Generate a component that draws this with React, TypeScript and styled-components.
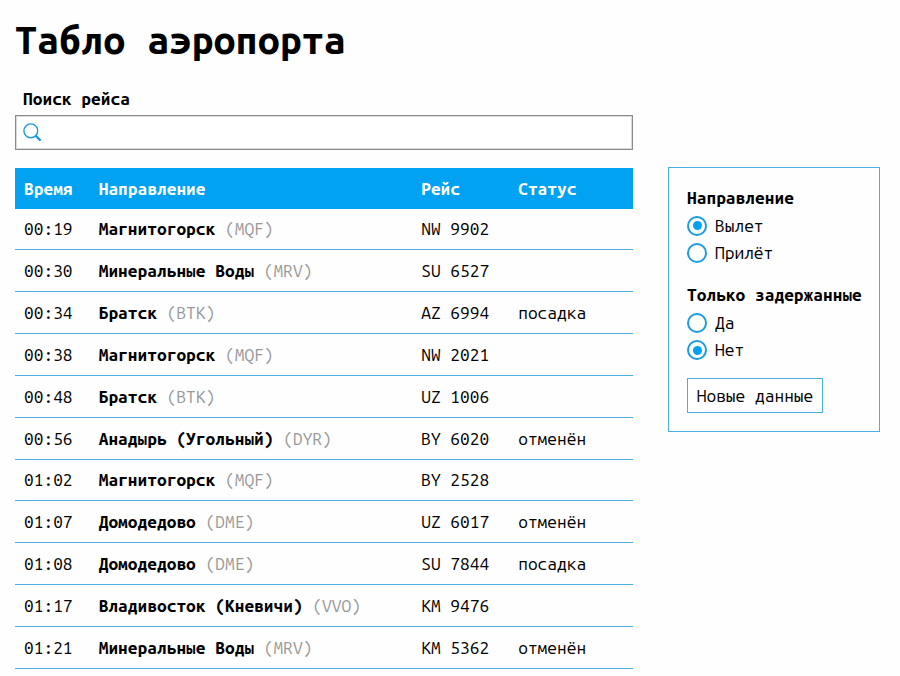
import React, { useState } from "react";
import styled, { createGlobalStyle } from "styled-components";

const ACCENT = "#00a2f1";
const LINE = "#4aaede";

const GlobalStyle = createGlobalStyle`
  * { box-sizing: border-box; }
  body {
    margin: 0;
    background: #fefefe;
    color: #000;
    font: 17.35px/20px "Ubuntu Mono", "DejaVu Sans Mono", monospace;
    overflow: hidden;
  }
`;

const Page = styled.main`
  width: 900px;
  height: 676px;
  padding: 13px 20px 0 15px;
  overflow: hidden;
`;

const Title = styled.h1`
  margin: 0 0 24px;
  font-size: 39.4px;
  line-height: 52px;
  font-weight: 700;
  white-space: nowrap;
`;

const Columns = styled.div`
  display: grid;
  grid-template-columns: 618px 212px;
  column-gap: 35px;
  align-items: start;
`;

const Main = styled.section`
  display: flex;
  flex-direction: column;
`;

const SearchLabel = styled.label`
  padding-left: 8px;
  margin-bottom: 6px;
  font-weight: 700;
`;

const SearchField = styled.div`
  display: flex;
  align-items: center;
  height: 35px;
  margin-bottom: 17.6px;
  padding-left: 7px;
  border: 1px solid #8b8b8b;
  box-shadow: inset 0 0 0 1px #d9d9d9;
  background: #fff;
`;

const SearchInput = styled.input`
  flex: 1;
  min-width: 0;
  margin: 0 8px;
  border: 0;
  outline: 0;
  background: transparent;
  font: inherit;
`;

const Row = styled.div<{ $head?: boolean }>`
  display: grid;
  grid-template-columns: 74.7px 322.5px 97px 1fr;
  align-items: center;
  height: ${(p) => (p.$head ? "41px" : "41.84px")};
  padding: ${(p) => (p.$head ? "2px 0 0 9px" : "0.8px 0 0 9px")};
  border-bottom: ${(p) => (p.$head ? "0" : `1px solid ${LINE}`)};
  background: ${(p) => (p.$head ? ACCENT : "transparent")};
  color: ${(p) => (p.$head ? "#fff" : "inherit")};
  font-weight: ${(p) => (p.$head ? 700 : 400)};
  white-space: nowrap;
`;

const Code = styled.span`
  color: #999;
`;

const Panel = styled.aside`
  margin-top: 78px;
  height: 265px;
  padding: 20px 0 0 18px;
  border: 1px solid ${LINE};
`;

const Group = styled.div`
  margin-bottom: 14px;

  & + & {
    margin-top: 18px;
  }
`;

const GroupTitle = styled.div`
  height: 24px;
  font-weight: 700;
  white-space: nowrap;
`;

const Option = styled.label`
  display: flex;
  align-items: center;
  gap: 8px;
  height: 27.5px;
`;

const Radio = styled.input`
  appearance: none;
  display: grid;
  place-items: center;
  width: 20px;
  height: 20px;
  margin: 0;
  border: 2px solid #1b9be0;
  border-radius: 50%;
  background: #fff;

  &:checked::before {
    content: "";
    width: 9px;
    height: 9px;
    border-radius: 50%;
    background: ${ACCENT};
  }
`;

const RefreshButton = styled.button`
  width: 136px;
  height: 35px;
  padding: 0;
  border: 1px solid ${LINE};
  background: #fff;
  color: #000;
  font: inherit;
  white-space: nowrap;
`;

const SearchIcon = () => (
  <svg width="19" height="19" viewBox="0 0 19 19" fill="none" stroke="#1c98da">
    <circle cx="7.8" cy="7.8" r="6.9" strokeWidth="1.4" />
    <path d="M12.6 12.6 17.6 17.6" strokeWidth="2.2" />
  </svg>
);

const flights = [
  ["00:19", "Магнитогорск", "MQF", "NW 9902", ""],
  ["00:30", "Минеральные Воды", "MRV", "SU 6527", ""],
  ["00:34", "Братск", "BTK", "AZ 6994", "посадка"],
  ["00:38", "Магнитогорск", "MQF", "NW 2021", ""],
  ["00:48", "Братск", "BTK", "UZ 1006", ""],
  ["00:56", "Анадырь (Угольный)", "DYR", "BY 6020", "отменён"],
  ["01:02", "Магнитогорск", "MQF", "BY 2528", ""],
  ["01:07", "Домодедово", "DME", "UZ 6017", "отменён"],
  ["01:08", "Домодедово", "DME", "SU 7844", "посадка"],
  ["01:17", "Владивосток (Кневичи)", "VVO", "KM 9476", ""],
  ["01:21", "Минеральные Воды", "MRV", "KM 5362", "отменён"],
];

function RadioGroup({ title, options, initial }: { title: string; options: string[]; initial: string }) {
  const [value, setValue] = useState(initial);
  return (
    <Group>
      <GroupTitle>{title}</GroupTitle>
      {options.map((o) => (
        <Option key={o}>
          <Radio type="radio" name={title} checked={value === o} onChange={() => setValue(o)} />
          {o}
        </Option>
      ))}
    </Group>
  );
}

export default function App() {
  return (
    <Page>
      <GlobalStyle />
      <Title>Табло аэропорта</Title>
      <Columns>
        <Main>
          <SearchLabel htmlFor="search">Поиск рейса</SearchLabel>
          <SearchField>
            <SearchIcon />
            <SearchInput id="search" />
          </SearchField>
          <Row $head>
            <span>Время</span>
            <span>Направление</span>
            <span>Рейс</span>
            <span>Статус</span>
          </Row>
          {flights.map(([time, city, code, flight, status]) => (
            <Row key={time}>
              <span>{time}</span>
              <span>
                <b>{city}</b> <Code>({code})</Code>
              </span>
              <span>{flight}</span>
              <span>{status}</span>
            </Row>
          ))}
        </Main>
        <Panel>
          <RadioGroup title="Направление" options={["Вылет", "Прилёт"]} initial="Вылет" />
          <RadioGroup title="Только задержанные" options={["Да", "Нет"]} initial="Нет" />
          <RefreshButton>Новые данные</RefreshButton>
        </Panel>
      </Columns>
    </Page>
  );
}
